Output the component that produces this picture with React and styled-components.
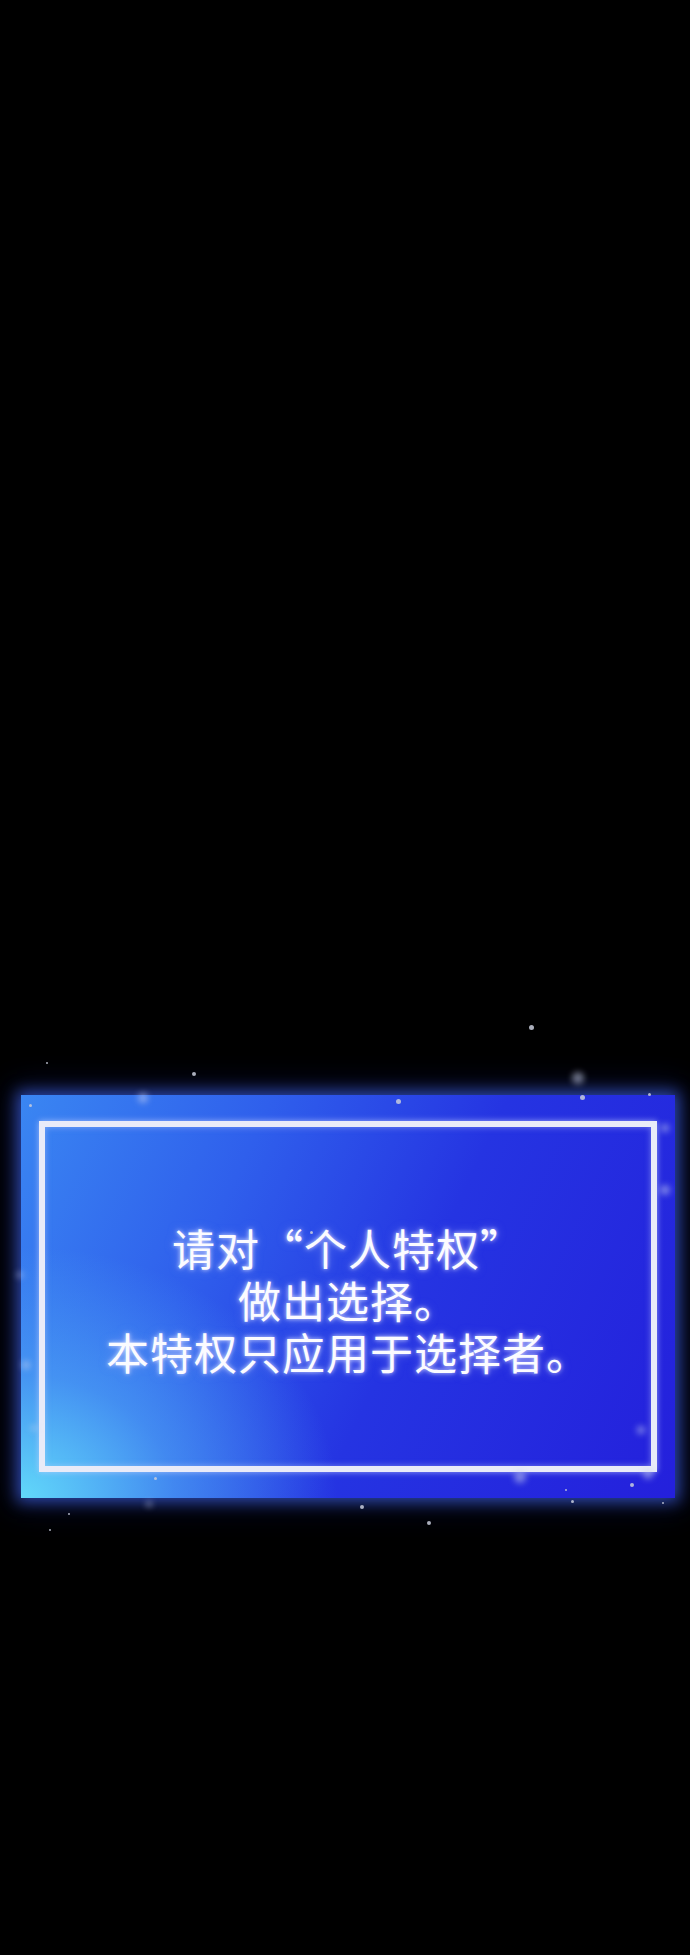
import React from "react";
import styled, { createGlobalStyle } from "styled-components";

const GlobalStyle = createGlobalStyle`
  html, body {
    margin: 0;
    padding: 0;
    background: #000;
  }
`;

const Page = styled.div`
  background: #000;
  box-sizing: border-box;
  height: 1955px;
  overflow: hidden;
  padding: 1095px 15px 0 21px;
  position: relative;
  width: 690px;
`;

const Panel = styled.div`
  background:
    radial-gradient(ellipse 62% 80% at 0% 100%, rgba(100, 222, 250, 0.95) 0%, rgba(80, 172, 245, 0.6) 38%, rgba(60, 110, 240, 0) 78%),
    linear-gradient(115deg, #3a86f2 0%, #2f5fec 30%, #2534e2 58%, #2420dc 100%);
  box-shadow: 0 0 14px 4px rgba(70, 110, 255, 0.6), 0 0 30px 8px rgba(40, 60, 200, 0.25);
  box-sizing: border-box;
  display: flex;
  height: 403px;
  padding: 26px 18px;
  position: relative;
  width: 654px;
`;

const Frame = styled.div`
  align-items: center;
  border: 6px solid #e9ebf8;
  box-shadow: 0 0 6px rgba(200, 210, 255, 0.7), inset 0 0 6px rgba(200, 210, 255, 0.5);
  box-sizing: border-box;
  display: flex;
  flex: 1;
  flex-direction: column;
  gap: 2px;
  justify-content: center;
  padding-top: 4px;
`;

const Line = styled.div`
  color: #fbfbff;
  font-family: "Noto Sans CJK SC", "Noto Sans", sans-serif;
  font-size: 43px;
  font-weight: 400;
  letter-spacing: 1px;
  line-height: 50px;
  text-align: center;
  text-shadow: 0 0 4px rgba(220, 225, 255, 0.9), 0 0 10px rgba(170, 180, 255, 0.6);
  white-space: nowrap;
`;

const Star = styled.span`
  background: ${(p) => (p.$soft ? "rgba(200, 210, 240, 0.55)" : "rgba(200, 205, 220, 0.85)")};
  border-radius: 50%;
  filter: ${(p) => (p.$soft ? "blur(3px)" : "none")};
  height: ${(p) => p.$size}px;
  pointer-events: none;
  position: absolute;
  width: ${(p) => p.$size}px;
`;

// loose sparkles scattered over and around the panel
const stars = [
  { x: 531, y: 1027, size: 5 },
  { x: 194, y: 1074, size: 4 },
  { x: 578, y: 1078, size: 12, soft: true },
  { x: 582, y: 1097, size: 5 },
  { x: 47, y: 1063, size: 2 },
  { x: 143, y: 1098, size: 10, soft: true },
  { x: 398, y: 1101, size: 5 },
  { x: 649, y: 1094, size: 3 },
  { x: 30, y: 1105, size: 3 },
  { x: 665, y: 1128, size: 8, soft: true },
  { x: 665, y: 1190, size: 10, soft: true },
  { x: 20, y: 1275, size: 6, soft: true },
  { x: 26, y: 1365, size: 8, soft: true },
  { x: 34, y: 1428, size: 6, soft: true },
  { x: 641, y: 1430, size: 8, soft: true },
  { x: 648, y: 1474, size: 10, soft: true },
  { x: 520, y: 1477, size: 12, soft: true },
  { x: 632, y: 1485, size: 4 },
  { x: 566, y: 1490, size: 2 },
  { x: 155, y: 1478, size: 3 },
  { x: 149, y: 1504, size: 6, soft: true },
  { x: 362, y: 1507, size: 4 },
  { x: 429, y: 1523, size: 4 },
  { x: 50, y: 1530, size: 2 },
  { x: 69, y: 1514, size: 2 },
  { x: 572, y: 1501, size: 3 },
  { x: 663, y: 1503, size: 2 },
  { x: 311, y: 1232, size: 3 },
];

const App = () => (
  <>
    <GlobalStyle />
    <Page>
      <Panel>
        <Frame>
          <Line>请对“个人特权”</Line>
          <Line>做出选择。</Line>
          <Line>本特权只应用于选择者。</Line>
        </Frame>
      </Panel>
      {stars.map((s, i) => (
        <Star
          key={i}
          $size={s.size}
          $soft={s.soft}
          style={{ left: s.x - s.size / 2, top: s.y - s.size / 2 }}
        />
      ))}
    </Page>
  </>
);

export default App;
